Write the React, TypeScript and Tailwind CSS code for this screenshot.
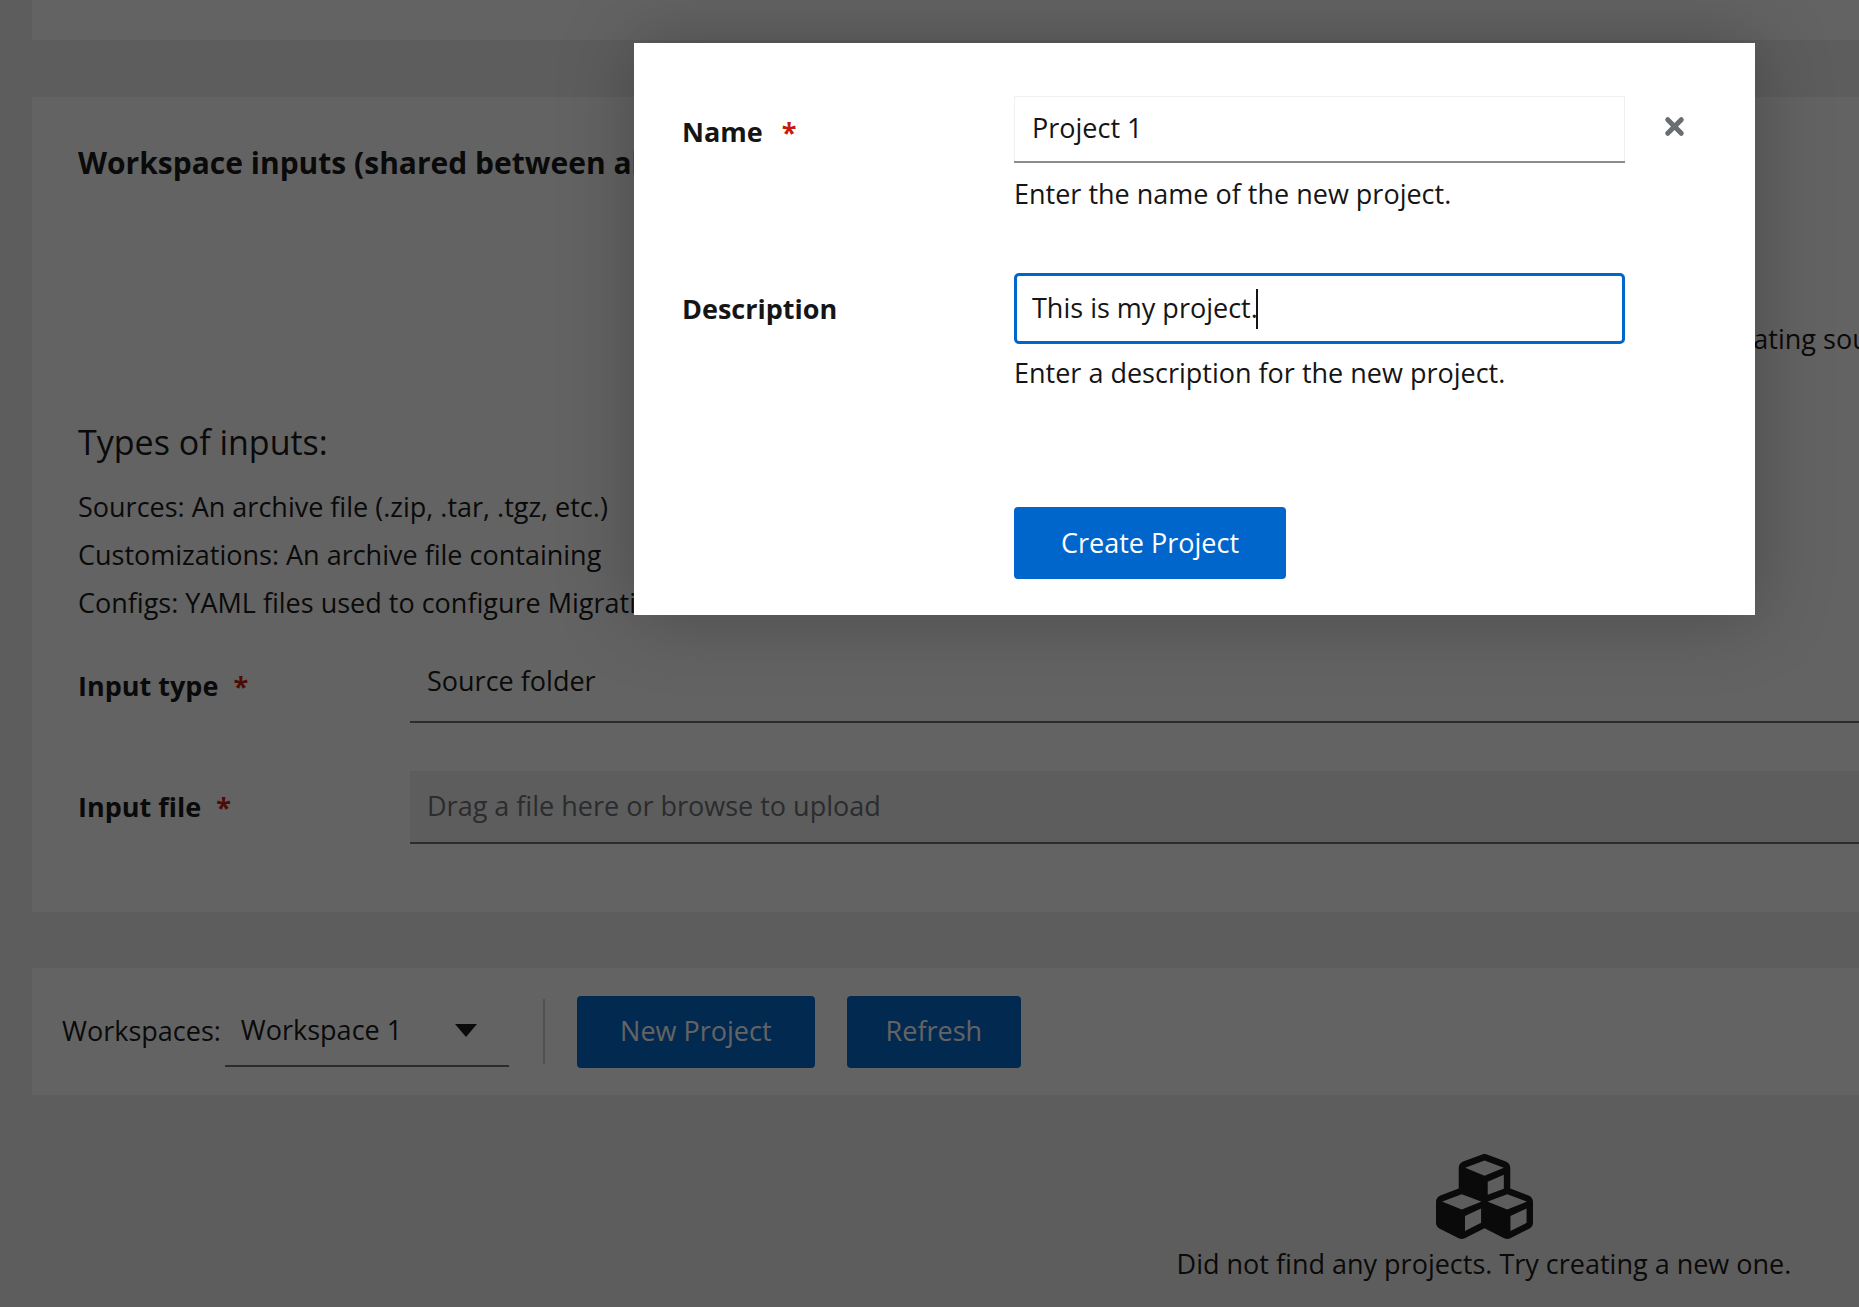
import { FaCubes } from "react-icons/fa";
import { X } from "lucide-react";

const Req = ({ ml }: { ml: string }) => (
  <span className={`${ml} text-[#c9190b]`}>*</span>
);

export default function App() {
  return (
    <div className="relative h-[1307px] w-[1859px] overflow-hidden bg-[#f0f0f0] pl-8 font-['Open_Sans',sans-serif] text-[27px] text-[#151515]">
      <div className="h-10 w-[2400px] bg-white" />

      <section className="mt-[57px] h-[815px] w-[2400px] bg-white pl-[46px]">
        <h2 className="pt-[46px] text-[30px] leading-10 font-bold whitespace-nowrap">
          Workspace inputs (shared between all projects)
        </h2>
        <p className="mt-[136px] ml-[1560px] leading-10 whitespace-nowrap">when creating sources</p>
        <h3 className="mt-[61px] text-[34px] leading-[44px] font-medium">Types of inputs:</h3>
        <div className="mt-[19px] leading-[48px] whitespace-nowrap">
          <p>Sources: An archive file (.zip, .tar, .tgz, etc.)</p>
          <p>
            Customizations: An archive file containing
            <span className="ml-[600px]">patches, files with values</span>
          </p>
          <p>Configs: YAML files used to configure Migration</p>
        </div>
        <div className="mt-[23px] flex h-[73px] items-center">
          <label className="w-[332px] text-[27px] font-bold">
            Input type <Req ml="ml-2" />
          </label>
          <div className="flex h-[73px] flex-1 items-center border-b-2 border-[#6a6e73] bg-white pb-2 pl-[17px]">
            Source folder
          </div>
        </div>
        <div className="mt-12 flex h-[73px] items-center">
          <label className="w-[332px] text-[27px] font-bold">
            Input file <Req ml="ml-2" />
          </label>
          <div className="flex h-[73px] flex-1 items-center border-b-2 border-[#6a6e73] bg-[#f0f0f0] pl-[17px] text-[#6a6e73]">
            Drag a file here or browse to upload
          </div>
        </div>
      </section>

      <section className="mt-14 flex h-[127px] w-[2400px] items-center bg-white pl-[30px]">
        <span>Workspaces:</span>
        <div className="ml-[4px] flex h-[71px] w-[284px] items-center justify-between border-b-2 border-[#6a6e73] pr-[32px] pl-[16px]">
          <span>Workspace 1</span>
          <svg width="22" height="13" viewBox="0 0 22 13" fill="#151515"><path d="M0 0h22L11 13z" /></svg>
        </div>
        <div className="ml-[34px] h-[65px] w-[2px] bg-[#d2d2d2]" />
        <button className="ml-[32px] h-[72px] w-[238px] rounded-[4px] bg-[#0066cc] text-white">New Project</button>
        <button className="ml-8 h-[72px] w-[174px] rounded-[4px] bg-[#0066cc] text-white">Refresh</button>
      </section>

      <div className="ml-[1108px] flex w-[688px] flex-col items-center pt-[53px]">
        <FaCubes size={97} />
        <p className="mt-[-1px] whitespace-nowrap">Did not find any projects. Try creating a new one.</p>
      </div>

      <div className="absolute inset-0 bg-[rgba(3,3,3,0.62)]" />

      <div className="absolute top-[43px] left-[634px] h-[572px] w-[1121px] bg-white shadow-[0_0_70px_rgba(0,0,0,0.25)]">
        <button className="absolute top-[70px] right-[67px] text-[#6a6e73]">
          <X size={27} strokeWidth={4.5} />
        </button>
        <div className="grid grid-cols-[332px_611px] pt-[53px] pl-[48px]">
          <label className="pt-[16px] font-bold">
            Name <Req ml="ml-3" />
          </label>
          <div>
            <div className="flex h-[67px] items-center border-b-2 border-[#8a8d90] pl-[18px] shadow-[inset_1px_1px_0_#f0f0f0,inset_-1px_0_0_#f0f0f0]">Project 1</div>
            <p className="mt-[11px] h-[40px] leading-[40px]">Enter the name of the new project.</p>
          </div>
          <label className="mt-[59px] pt-[16px] font-bold">Description</label>
          <div className="mt-[59px]">
            <div className="flex h-[71px] items-center rounded-[5px] border-[3px] border-[#0066cc] pl-[15px]">
              This is my project.<span className="ml-[-2px] h-[40px] w-[2px] bg-[#151515]" />
            </div>
            <p className="mt-[9px] h-[40px] leading-[40px]">Enter a description for the new project.</p>
          </div>
          <div />
          <button className="mt-[114px] h-[72px] w-[272px] rounded-[4px] bg-[#0066cc] text-white">Create Project</button>
        </div>
      </div>
    </div>
  );
}
